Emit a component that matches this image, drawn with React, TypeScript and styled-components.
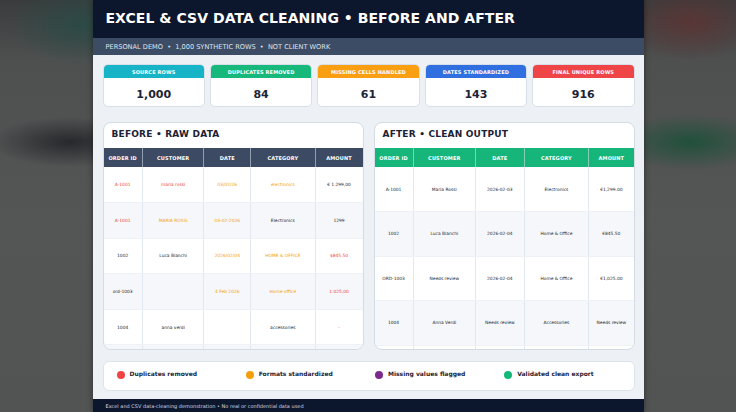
import React from "react";
import styled, { createGlobalStyle } from "styled-components";

const GlobalStyle = createGlobalStyle`
  html, body { margin: 0; padding: 0; height: 100%; overflow: hidden; }
  body {
    font-family: "DejaVu Sans", "Noto Sans", sans-serif;
    background:
      radial-gradient(ellipse 70px 40px at 80px 25px, rgba(40, 75, 70, 0.85), rgba(40, 75, 70, 0) 100%),
      radial-gradient(ellipse 80px 25px at 70px 142px, rgba(36, 38, 42, 0.95), rgba(36, 38, 42, 0) 100%),
      radial-gradient(ellipse 70px 40px at 690px 22px, rgba(95, 50, 50, 0.8), rgba(95, 50, 50, 0) 100%),
      radial-gradient(ellipse 80px 28px at 690px 142px, rgba(30, 80, 58, 0.95), rgba(30, 80, 58, 0) 100%),
      linear-gradient(180deg, #3a3c3d 0px, #4e5050 60px, #545555 220px, #525353 412px);
  }
`;

const Page = styled.div`
  width: 551px;
  height: 412px;
  margin: 0 auto;
  background: #edf0f5;
  display: flex;
  flex-direction: column;
  overflow: hidden;
  box-shadow: 0 0 6px rgba(0, 0, 0, 0.45);
`;

const Header = styled.header`
  flex: none;
  height: 38px;
  background: #0c172d;
  display: flex;
  align-items: center;
  padding: 0 13px 3px;
  box-sizing: border-box;
`;

const Title = styled.h1`
  margin: 0;
  color: #ffffff;
  font-size: 14px;
  font-weight: 700;
  letter-spacing: 0.05px;
  white-space: nowrap;
`;

const SubBar = styled.div`
  flex: none;
  height: 17px;
  background: #3d4c65;
  color: #dfe5ee;
  font-size: 6.6px;
  display: flex;
  align-items: center;
  padding: 0 13px;
  white-space: pre;
`;

const Body = styled.main`
  flex: none;
  padding: 9px 9px 0 10px;
  display: flex;
  flex-direction: column;
`;

const Stats = styled.section`
  display: grid;
  grid-template-columns: repeat(5, 1fr);
  gap: 5px;
  height: 43px;
`;

const StatCard = styled.div`
  background: #ffffff;
  border: 1px solid #d8dfe8;
  border-radius: 5px;
  overflow: hidden;
  display: flex;
  flex-direction: column;
`;

const StatHead = styled.div<{ $c: string }>`
  flex: none;
  height: 13px;
  background: ${(p) => p.$c};
  color: #ffffff;
  font-size: 5px;
  font-weight: 700;
  letter-spacing: 0.15px;
  display: flex;
  align-items: center;
  justify-content: center;
  text-transform: uppercase;
`;

const StatValue = styled.div`
  flex: 1;
  display: flex;
  align-items: center;
  justify-content: center;
  font-size: 11px;
  font-weight: 700;
  color: #1c2436;
  padding-top: 4px;
`;

const Tables = styled.section`
  display: grid;
  grid-template-columns: 1fr 1fr;
  gap: 10px;
  margin-top: 15px;
  height: 228px;
`;

const TableCard = styled.div`
  background: #ffffff;
  border: 1px solid #d3dbe5;
  border-radius: 8px;
  overflow: hidden;
  display: flex;
  flex-direction: column;
`;

const TableTitle = styled.h2`
  flex: none;
  margin: 0;
  height: 25px;
  box-sizing: border-box;
  padding: 0 8px 3px;
  display: flex;
  align-items: center;
  font-size: 9px;
  font-weight: 700;
  color: #1b2233;
  letter-spacing: 0.2px;
`;

const DataTable = styled.table<{ $rowH: number }>`
  width: 100%;
  border-collapse: collapse;
  table-layout: fixed;

  tbody tr {
    height: ${(p) => p.$rowH}px;
  }
  tbody tr:nth-child(even) {
    background: #f5f7fa;
  }
`;

const Th = styled.th<{ $bg: string }>`
  height: 19px;
  padding: 0;
  background: ${(p) => p.$bg};
  color: #ffffff;
  font-size: 5px;
  font-weight: 700;
  letter-spacing: 0.15px;
  text-align: center;
  border-right: 1.5px solid rgba(220, 228, 238, 0.55);
  &:last-child { border-right: none; }
`;

const Td = styled.td<{ $tone?: "red" | "orange" }>`
  padding: 0 2px;
  text-align: center;
  vertical-align: middle;
  font-size: 4.4px;
  color: ${(p) => (p.$tone === "red" ? "#ef4444" : p.$tone === "orange" ? "#f59e0b" : "#222831")};
  border-right: 1.5px solid #e2e8f0;
  border-bottom: 1px solid #eef1f5;
  white-space: nowrap;
  overflow: hidden;
  &:last-child { border-right: none; }
`;

const Legend = styled.section`
  margin-top: 11px;
  height: 30px;
  box-sizing: border-box;
  background: #ffffff;
  border: 1px solid #dde3ea;
  border-radius: 6px;
  display: grid;
  grid-template-columns: repeat(4, 1fr);
  align-items: center;
  padding: 0 0 5px 13px;
`;

const LegendItem = styled.div`
  display: flex;
  align-items: center;
  gap: 5px;
`;

const Dot = styled.span<{ $c: string }>`
  width: 8px;
  height: 8px;
  border-radius: 50%;
  background: ${(p) => p.$c};
  margin-top: 3px;
  flex: none;
`;

const LegendLabel = styled.span`
  font-size: 6px;
  font-weight: 700;
  color: #1d2435;
  white-space: nowrap;
`;

const Footer = styled.footer`
  flex: none;
  margin-top: 8px;
  height: 14px;
  background: #0c172d;
  color: #d3d9e3;
  font-size: 5px;
  display: flex;
  align-items: center;
  padding: 0 13px;
  white-space: nowrap;
`;

type Tone = "red" | "orange" | undefined;
type Cell = [string, Tone?];

const stats = [
  { label: "Source rows", value: "1,000", color: "#17b3c6" },
  { label: "Duplicates removed", value: "84", color: "#16b87c" },
  { label: "Missing cells handled", value: "61", color: "#fb9f12" },
  { label: "Dates standardized", value: "143", color: "#2f6fe0" },
  { label: "Final unique rows", value: "916", color: "#ef4547" },
];

const headers = ["ORDER ID", "CUSTOMER", "DATE", "CATEGORY", "AMOUNT"];

const beforeCols = ["15%", "23.8%", "18%", "24.9%", "18.3%"];
const afterCols = ["14.9%", "24.1%", "18.8%", "24.9%", "17.3%"];

const beforeRows: Cell[][] = [
  [["A-1001", "red"], ["maria rossi", "red"], ["03/02/26", "orange"], ["electronics", "orange"], ["€ 1.299,00"]],
  [["A-1001", "red"], ["MARIA ROSSI", "orange"], ["03-02-2026", "orange"], ["Electronics"], ["1299"]],
  [["1002"], ["Luca Bianchi"], ["2026/02/04", "orange"], ["HOME & OFFICE", "orange"], ["$845.50", "red"]],
  [["ord-1003"], [""], ["4 Feb 2026", "orange"], ["Home-office", "orange"], ["1.025,00", "red"]],
  [["1004"], ["anna verdi"], [""], ["accessories"], ["-", "red"]],
  [[""], [""], [""], [""], [""]],
];

const afterRows: Cell[][] = [
  [["A-1001"], ["Maria Rossi"], ["2026-02-03"], ["Electronics"], ["€1,299.00"]],
  [["1002"], ["Luca Bianchi"], ["2026-02-04"], ["Home & Office"], ["€845.50"]],
  [["ORD-1003"], ["Needs review"], ["2026-02-04"], ["Home & Office"], ["€1,025.00"]],
  [["1004"], ["Anna Verdi"], ["Needs review"], ["Accessories"], ["Needs review"]],
  [[""], [""], [""], [""], [""]],
];

const legend = [
  { label: "Duplicates removed", color: "#ef4444" },
  { label: "Formats standardized", color: "#f59e0b" },
  { label: "Missing values flagged", color: "#7e2a8c" },
  { label: "Validated clean export", color: "#14b87a" },
];

function DataPanel(props: { title: string; headBg: string; cols: string[]; rows: Cell[][]; rowH: number }) {
  return (
    <TableCard>
      <TableTitle>{props.title}</TableTitle>
      <DataTable $rowH={props.rowH}>
        <colgroup>
          {props.cols.map((w, i) => (
            <col key={i} style={{ width: w }} />
          ))}
        </colgroup>
        <thead>
          <tr>
            {headers.map((h) => (
              <Th key={h} $bg={props.headBg}>
                {h}
              </Th>
            ))}
          </tr>
        </thead>
        <tbody>
          {props.rows.map((r, i) => (
            <tr key={i}>
              {r.map(([t, tone], j) => (
                <Td key={j} $tone={tone}>
                  {t}
                </Td>
              ))}
            </tr>
          ))}
        </tbody>
      </DataTable>
    </TableCard>
  );
}

export default function App() {
  return (
    <>
      <GlobalStyle />
      <Page>
        <Header>
          <Title>EXCEL &amp; CSV DATA CLEANING • BEFORE AND AFTER</Title>
        </Header>
        <SubBar>PERSONAL DEMO  •  1,000 SYNTHETIC ROWS  •  NOT CLIENT WORK</SubBar>
        <Body>
          <Stats>
            {stats.map((s) => (
              <StatCard key={s.label}>
                <StatHead $c={s.color}>{s.label}</StatHead>
                <StatValue>{s.value}</StatValue>
              </StatCard>
            ))}
          </Stats>
          <Tables>
            <DataPanel title="BEFORE • RAW DATA" headBg="#3d4a63" cols={beforeCols} rows={beforeRows} rowH={35.6} />
            <DataPanel title="AFTER • CLEAN OUTPUT" headBg="#16b67a" cols={afterCols} rows={afterRows} rowH={44.5} />
          </Tables>
          <Legend>
            {legend.map((l) => (
              <LegendItem key={l.label}>
                <Dot $c={l.color} />
                <LegendLabel>{l.label}</LegendLabel>
              </LegendItem>
            ))}
          </Legend>
        </Body>
        <Footer>Excel and CSV data-cleaning demonstration • No real or confidential data used</Footer>
      </Page>
    </>
  );
}
